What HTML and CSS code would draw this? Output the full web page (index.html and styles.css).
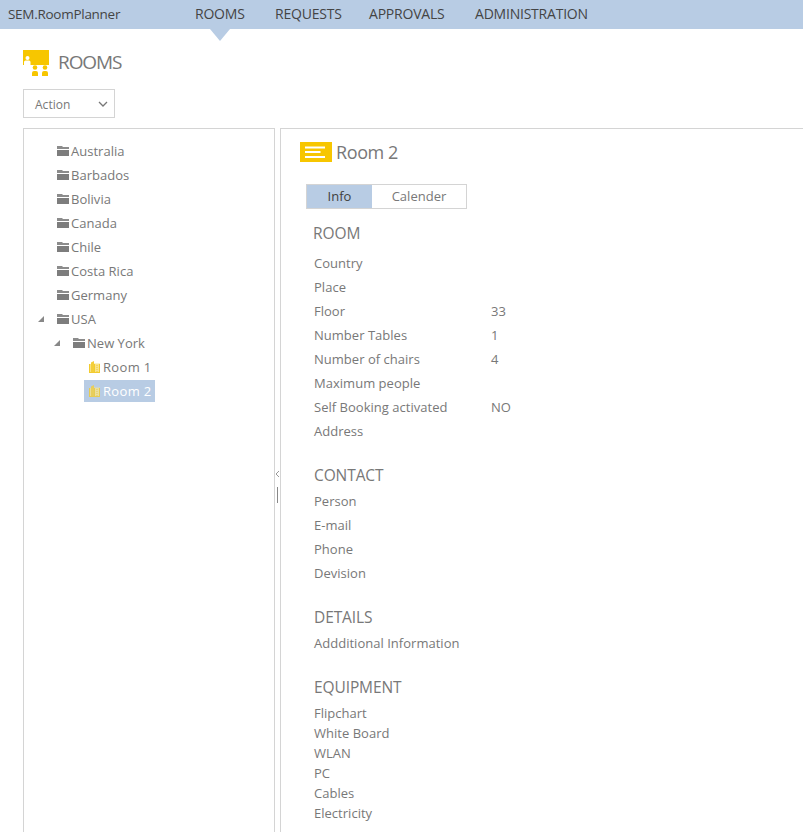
FILE: index.html
```
<!DOCTYPE html>
<html lang="en">
<head>
<meta charset="utf-8">
<title>SEM.RoomPlanner</title>
<link rel="stylesheet" href="styles.css">
</head>
<body>
<svg class="defs" aria-hidden="true">
  <symbol id="folder" viewBox="0 0 12 10"><path d="M0 0h5l1 1h6v2H0z" fill="#8c8c8c"/><path d="M0 4h12v6H0z" fill="#7d7d7d"/></symbol>
  <symbol id="building" viewBox="0 0 12 12"><path d="M1 3h2v9H1z" fill="#f8e284"/><path d="M3 1.500L6 0v12H3z" fill="#f4cf3a"/><path d="M6 2.500h6V12H6z" fill="#f8e48e"/><path d="M6.500 3v9M11.500 3v9M1 11.500h11M1.500 3v9" stroke="#f2cb30"/><path d="M9 4v7" stroke="#f2cb30" stroke-dasharray="1 1"/></symbol>
  <symbol id="expanded" viewBox="0 0 6 6"><path d="M6 0v6H0z" fill="#888"/></symbol>
</svg>
<header class="topbar">
  <div class="brand">SEM.RoomPlanner</div>
  <nav class="nav">
    <a class="active">ROOMS</a><a>REQUESTS</a><a>APPROVALS</a><a>ADMINISTRATION</a>
  </nav>
</header>
<div class="page-title">
  <svg width="27" height="27" viewBox="0 0 27 27"><path d="M0 0h26v15H0z" fill="#f7c600"/><circle cx="4.500" cy="8" r="2" fill="#fff"/><path d="M1 15v-3q0-1.500 1.500-1.500H6q1.500 0 1.500 1.500v3z" fill="#fff"/><g fill="#f7c600"><circle cx="12" cy="17.500" r="2.300"/><circle cx="22" cy="17.500" r="2.300"/><path d="M9 26v-3q0-2 2-2h2q2 0 2 2v3zM19 26v-3q0-2 2-2h2q2 0 2 2v3z"/></g></svg>
  <h1>ROOMS</h1>
</div>
<div class="action"><span>Action</span><svg width="10" height="7" viewBox="0 0 10 7"><path d="M1 1l4 4 4-4" fill="none" stroke="#777" stroke-width="1.300"/></svg></div>
<main class="workspace">
  <aside class="tree">
    <div class="node"><i></i><svg class="folder"><use href="#folder"/></svg><span>Australia</span></div>
    <div class="node"><i></i><svg class="folder"><use href="#folder"/></svg><span>Barbados</span></div>
    <div class="node"><i></i><svg class="folder"><use href="#folder"/></svg><span>Bolivia</span></div>
    <div class="node"><i></i><svg class="folder"><use href="#folder"/></svg><span>Canada</span></div>
    <div class="node"><i></i><svg class="folder"><use href="#folder"/></svg><span>Chile</span></div>
    <div class="node"><i></i><svg class="folder"><use href="#folder"/></svg><span>Costa Rica</span></div>
    <div class="node"><i></i><svg class="folder"><use href="#folder"/></svg><span>Germany</span></div>
    <div class="node"><i><svg class="arrow"><use href="#expanded"/></svg></i><svg class="folder"><use href="#folder"/></svg><span>USA</span></div>
    <div class="node level-2"><i><svg class="arrow"><use href="#expanded"/></svg></i><svg class="folder"><use href="#folder"/></svg><span>New York</span></div>
    <div class="node room"><div class="item"><svg class="building"><use href="#building"/></svg><span>Room 1</span></div></div>
    <div class="node room"><div class="item selected"><svg class="building"><use href="#building"/></svg><span>Room 2</span></div></div>
  </aside>
  <div class="splitter"><svg width="5" height="34" viewBox="0 0 5 34"><path d="M4 1L1 4l3 3" fill="none" stroke="#999"/><path d="M2.500 17v16" stroke="#888"/></svg></div>
  <section class="detail">
    <div class="detail-title"><svg width="32" height="20" viewBox="0 0 32 20"><path d="M0 0h32v20H0z" fill="#f7c600"/><path d="M5 5.500h20M5 10h15.500M5 15h20" stroke="#fff" stroke-width="2"/></svg><h2>Room 2</h2></div>
    <div class="tabs"><div class="tab current">Info</div><div class="tab">Calender</div></div>
    <h3 class="first">ROOM</h3>
    <dl>
      <dt>Country</dt><dd></dd><dt>Place</dt><dd></dd><dt>Floor</dt><dd>33</dd>
      <dt>Number Tables</dt><dd>1</dd><dt>Number of chairs</dt><dd>4</dd>
      <dt>Maximum people</dt><dd></dd><dt>Self Booking activated</dt><dd>NO</dd><dt>Address</dt><dd></dd>
    </dl>
    <h3>CONTACT</h3>
    <dl><dt>Person</dt><dd></dd><dt>E-mail</dt><dd></dd><dt>Phone</dt><dd></dd><dt>Devision</dt><dd></dd></dl>
    <h3>DETAILS</h3>
    <dl><dt>Addditional Information</dt><dd></dd></dl>
    <h3>EQUIPMENT</h3>
    <ul><li>Flipchart</li><li>White Board</li><li>WLAN</li><li>PC</li><li>Cables</li><li>Electricity</li></ul>
  </section>
</main>
</body>
</html>
```
FILE: styles.css
```
* { box-sizing: border-box; }
body { margin: 0; height: 832px; overflow: hidden; display: flex; flex-direction: column; background: #fff; color: #787878; font: 13px/24px "Open Sans", "Noto Sans", sans-serif; letter-spacing: .02px; }
.defs { position: absolute; width: 0; height: 0; }
svg { display: block; flex: none; }
h1, h2, h3, dl, dd, ul { margin: 0; padding: 0; font-weight: 400; }
.topbar { display: flex; flex: none; height: 29px; line-height: 28px; padding-left: 8px; background: #b8cce4; color: #444; }
.brand { width: 187px; font-size: 13.5px; letter-spacing: -.28px; }
.nav { display: grid; grid-template-columns: 80px 94px 106px auto; font-size: 14px; letter-spacing: -.22px; }
.nav a { position: relative; white-space: nowrap; }
.nav .active::after { content: ""; position: absolute; left: 15px; top: 29px; border: 10px solid transparent; border-top: 12px solid #b8cce4; border-bottom: 0; }
.page-title { display: flex; flex: none; height: 60px; padding: 21px 0 0 23px; }
.page-title h1 { margin: 0 0 0 8px; font-size: 19px; line-height: 25px; letter-spacing: -1.1px; }
.action { display: flex; flex: none; align-items: center; justify-content: space-between; width: 92px; height: 29px; margin-left: 23px; padding: 2px 6px 0 11px; border: 1px solid #d4d4d4; font-size: 12px; }
.workspace { display: flex; flex: 1; min-height: 0; margin: 10px 0 0 23px; }
.tree { width: 252px; flex: none; padding-top: 10px; border: 1px solid #d4d4d4; border-bottom: 0; }
.node { display: flex; align-items: center; height: 24px; padding-left: 14px; white-space: nowrap; }
.node i { display: block; width: 19px; }
.level-2 { padding-left: 30px; }
.room { padding-left: 60px; letter-spacing: .35px; }
.folder { width: 12px; height: 10px; margin-right: 2px; }
.arrow { width: 6px; height: 6px; }
.item { display: flex; align-items: center; width: 71px; height: 22px; padding-left: 4px; }
.building { width: 12px; height: 12px; margin-right: 3px; }
.selected { background: #b8cce4; color: #fff; }
.selected .building { opacity: .8; }
.splitter { width: 5px; flex: none; padding-top: 342px; }
.detail { flex: 1; padding: 13px 0 0 33px; border: 1px solid #d4d4d4; border-right: 0; border-bottom: 0; }
.detail-title { display: flex; gap: 4px; height: 42px; margin-left: -14px; }
.detail-title h2 { font-size: 18px; line-height: 21px; letter-spacing: -.4px; }
.tabs { display: flex; width: 161px; height: 25px; margin-left: -8px; border: 1px solid #d4d4d4; line-height: 23px; text-align: center; }
.tab { flex: 1; }
.tab.current { flex: none; width: 65px; background: #b8cce4; color: #404040; }
h3 { height: 24px; margin: 20px 0 2px; font-size: 15.5px; line-height: 25px; letter-spacing: -.1px; }
h3.first { margin: 12px 0 6px -1px; }
dl { display: grid; grid-template-columns: 177px 1fr; grid-auto-rows: 24px; white-space: nowrap; }
ul { margin-top: 4px; list-style: none; line-height: 20px; }
```
